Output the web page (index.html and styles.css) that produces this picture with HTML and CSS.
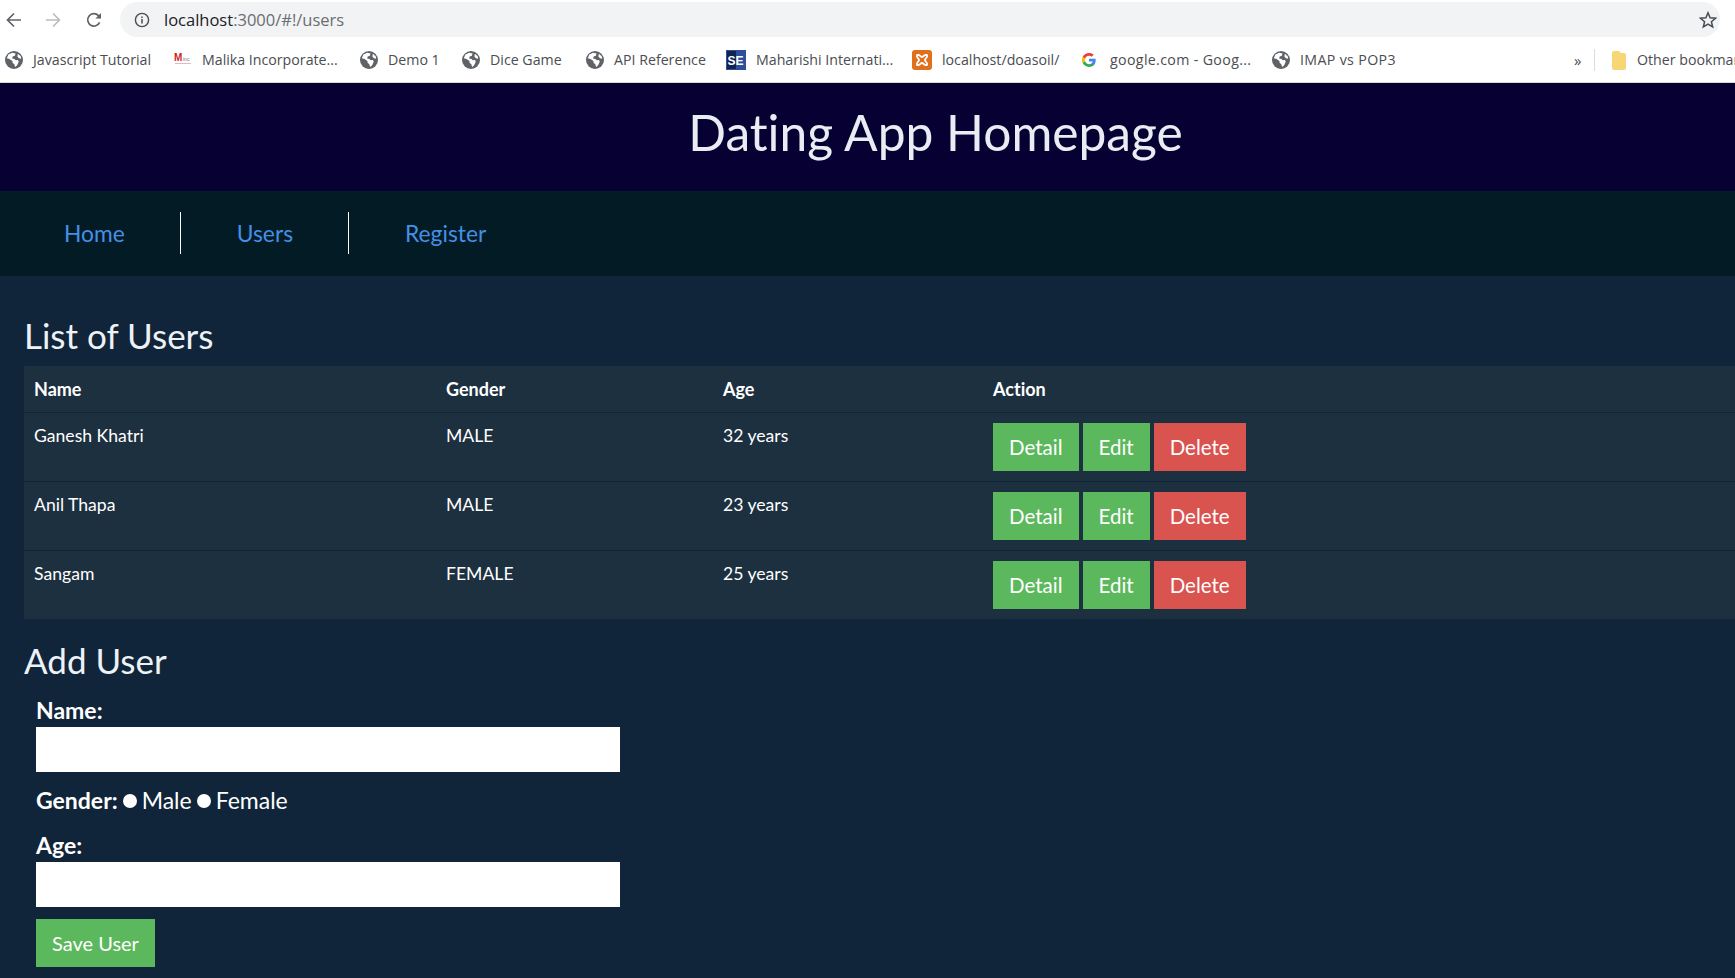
FILE: index.html
```html
<!DOCTYPE html>
<html lang="en">
<head>
    <meta charset="UTF-8">
    <title>Dating App Homepage</title>
    <link rel="stylesheet" href="styles.css">
</head>
<body>
    <svg class="defs" width="0" height="0">
        <symbol id="globe" viewBox="0 0 16 16">
            <circle cx="8" cy="8" r="8" fill="#5f6368"/>
            <path d="M3 3.2 6.4 1.6l3 .6-.6 2-2 .6-.4 1.8 2 .4 1.2 1.2 2-.2.6 1.6-1.4 3-1.8 1.6-.8-2.6-1.4-1-.2-1.8L4 7.2 1.6 6.4z" fill="#fff"/>
            <path d="M11.4 2.4 14 4.6l.4 2.2-2-.4-1.4-1.6z" fill="#fff"/>
        </symbol>
    </svg>

    <div class="toolbar">
        <svg class="nav-icon" width="18" height="18" viewBox="0 0 18 18"><path d="M16 9H3M9 2.500 2.500 9 9 15.500" fill="none" stroke="#5f6368" stroke-width="1.7"/></svg>
        <svg class="nav-icon forward" width="18" height="18" viewBox="0 0 18 18"><path d="M2 9h13M9 2.500 15.500 9 9 15.500" fill="none" stroke="#b9bcc0" stroke-width="1.7"/></svg>
        <svg class="nav-icon reload" width="18" height="18" viewBox="0 0 18 18"><path d="M14.600 11.400A6.200 6.200 0 1 1 13.400 4.600L15.600 6.800" fill="none" stroke="#5f6368" stroke-width="1.7"/><path d="M16 2v5.600h-5.600z" fill="#5f6368"/></svg>
        <div class="address">
            <svg width="16" height="16" viewBox="0 0 16 16"><circle cx="8" cy="8" r="6.600" fill="none" stroke="#4a4d51" stroke-width="1.4"/><path d="M8 7v4.400M8 4.400v1.500" stroke="#4a4d51" stroke-width="1.5"/></svg>
            <span class="url"><span class="host">localhost</span>:3000/#!/users</span>
            <svg class="star" width="18" height="18" viewBox="0 0 18 18"><path d="M9 1.800l2.100 5 5.400.4-4.100 3.500 1.300 5.300L9 13.200 4.300 16l1.300-5.300L1.500 7.200l5.400-.4z" fill="none" stroke="#4a4d51" stroke-width="1.5"/></svg>
        </div>
    </div>

    <div class="bookmarks">
        <a class="mark w-js"><svg width="18" height="18"><use href="#globe"/></svg>Javascript Tutorial</a>
        <a class="mark w-malika">
            <svg width="18" height="18" viewBox="0 0 18 18"><text x="0" y="10" class="logo-m">M</text><text x="9" y="10" class="logo-sub">inc</text><rect x="1" y="12" width="16" height="1" fill="#e9b7b7"/></svg>Malika Incorporate...</a>
        <a class="mark w-demo"><svg width="18" height="18"><use href="#globe"/></svg>Demo 1</a>
        <a class="mark w-dice"><svg width="18" height="18"><use href="#globe"/></svg>Dice Game</a>
        <a class="mark w-api"><svg width="18" height="18"><use href="#globe"/></svg>API Reference</a>
        <a class="mark w-mum">
            <svg width="20" height="20" viewBox="0 0 20 20"><rect width="20" height="20" fill="#2f4f9a"/><rect x="1" y="1" width="9" height="18" fill="#12234f"/><text x="1.500" y="15" class="logo-se">SE</text></svg>Maharishi Internati...</a>
        <a class="mark w-local">
            <svg width="20" height="20" viewBox="0 0 20 20"><rect width="20" height="20" rx="3" fill="#e0701d"/><path d="M5 5c3-1 3 2 5 2s2-3 5-2c1 3-2 3-2 5s3 2 2 5c-3 1-3-2-5-2s-2 3-5 2c-1-3 2-3 2-5S4 8 5 5z" fill="none" stroke="#fff" stroke-width="1.8"/></svg>localhost/doasoil/</a>
        <a class="mark w-google">
            <svg width="16" height="16" viewBox="0 0 48 48"><path d="M44 24.500c0-1.500-.1-2.900-.4-4.300H24v8.100h11.300c-.5 2.600-2 4.900-4.300 6.400v5.300h6.900C41.900 36.300 44 30.900 44 24.500z" fill="#4285f4"/><path d="M24 45c5.800 0 10.600-1.900 14-5.200l-6.900-5.300c-1.900 1.300-4.300 2-7.100 2-5.500 0-10.100-3.700-11.800-8.700H5.100v5.500C8.600 39.800 15.800 45 24 45z" fill="#34a853"/><path d="M12.200 27.800c-.9-2.600-.9-5.400 0-8v-5.500H5.100c-3 5.900-3 12.900 0 19z" fill="#fbbc05"/><path d="M24 11.300c3.100 0 5.900 1.100 8.100 3.200l6.100-6.100C34.500 5 29.700 3 24 3 15.800 3 8.600 8.200 5.100 14.300l7.100 5.500c1.700-5 6.300-8.500 11.800-8.500z" fill="#ea4335"/></svg>google.com - Goog...</a>
        <a class="mark w-imap"><svg width="18" height="18"><use href="#globe"/></svg>IMAP vs POP3</a>
        <span class="more">»</span>
        <span class="divider"></span>
        <a class="mark other">
            <svg width="16" height="20" viewBox="0 0 16 20"><path d="M1 3a2 2 0 0 1 2-2h5l2 2h3a2 2 0 0 1 2 2v13a2 2 0 0 1-2 2H3a2 2 0 0 1-2-2z" fill="#f6d675"/></svg>Other bookmarks</a>
    </div>

    <div class="page">
        <header class="site-header">
            <h1>Dating App Homepage</h1>
        </header>
        <nav class="site-nav">
            <a class="nav-link">Home</a>
            <a class="nav-link">Users</a>
            <a class="nav-link">Register</a>
        </nav>
        <main class="content">
            <h2>List of Users</h2>
            <table class="users">
                <thead>
                    <tr><th class="col-name">Name</th><th class="col-gender">Gender</th><th class="col-age">Age</th><th>Action</th></tr>
                </thead>
                <tbody>
                    <tr>
                        <td>Ganesh Khatri</td><td>MALE</td><td>32 years</td>
                        <td><div class="actions"><button class="btn green">Detail</button><button class="btn green">Edit</button><button class="btn red">Delete</button></div></td>
                    </tr>
                    <tr>
                        <td>Anil Thapa</td><td>MALE</td><td>23 years</td>
                        <td><div class="actions"><button class="btn green">Detail</button><button class="btn green">Edit</button><button class="btn red">Delete</button></div></td>
                    </tr>
                    <tr>
                        <td>Sangam</td><td>FEMALE</td><td>25 years</td>
                        <td><div class="actions"><button class="btn green">Detail</button><button class="btn green">Edit</button><button class="btn red">Delete</button></div></td>
                    </tr>
                </tbody>
            </table>

            <h2 class="add-title">Add User</h2>
            <form class="add-form">
                <div class="field">
                    <label for="name">Name:</label>
                    <input type="text" id="name">
                </div>
                <div class="field radios">
                    <label>Gender:</label>
                    <input type="radio" name="gender" id="male"><span>Male</span>
                    <input type="radio" name="gender" id="female"><span>Female</span>
                </div>
                <div class="field">
                    <label for="age">Age:</label>
                    <input type="text" id="age">
                </div>
                <button type="button" class="btn green save">Save User</button>
            </form>
        </main>
    </div>
</body>
</html>
```

FILE: styles.css
```css
html, body {
    margin: 0;
    padding: 0;
    height: 100%;
    overflow: hidden;
    background: #11253a;
}
body {
    font-family: "Lato", sans-serif;
    font-variant-ligatures: none;
    color: #fff;
}
.defs {
    position: absolute;
}
.toolbar {
    display: flex;
    align-items: center;
    height: 39px;
    padding-right: 15px;
    background: #fff;
    box-sizing: border-box;
}
.nav-icon {
    flex: none;
    margin-left: 5px;
}
.forward {
    margin-left: 21px;
}
.reload {
    margin-left: 23px;
}
.address {
    flex: 1;
    display: flex;
    align-items: center;
    height: 35px;
    margin-left: 17px;
    padding: 0 3px 0 14px;
    border-radius: 18px;
    background: #f1f3f4;
}
.url {
    margin-left: 14px;
    font-family: "Open Sans", sans-serif;
    font-size: 16.5px;
    color: #6a6d71;
}
.host {
    color: #202124;
}
.star {
    margin-left: auto;
}
.bookmarks {
    display: flex;
    align-items: center;
    height: 44px;
    padding-left: 5px;
    padding-bottom: 2px;
    background: #fff;
    border-bottom: 1px solid #d8dade;
    box-sizing: border-box;
    font-family: "Open Sans", sans-serif;
    font-size: 14.2px;
    color: #4a4d51;
    white-space: nowrap;
    overflow: hidden;
}
.mark {
    display: flex;
    align-items: center;
    flex: none;
    gap: 10px;
}
.mark svg {
    flex: none;
}
.w-js { width: 169px; }
.w-malika { width: 186px; }
.w-demo { width: 102px; }
.w-dice { width: 124px; }
.w-api { width: 140px; }
.w-mum { width: 186px; }
.w-local { width: 169px; }
.w-google { width: 191px; gap: 13px; letter-spacing: .35px; }
.w-imap { width: 302px; letter-spacing: .35px; }
.more {
    flex: none;
    width: 20px;
    font-size: 15px;
}
.divider {
    flex: none;
    width: 1px;
    height: 22px;
    margin-right: 15px;
    background: #d8dade;
}
.other {
    margin-left: 1px;
}
.logo-m {
    font-family: "Liberation Sans", sans-serif;
    font-size: 10px;
    font-weight: bold;
    fill: #cf1f1f;
}
.logo-sub {
    font-family: "Liberation Sans", sans-serif;
    font-size: 5px;
    fill: #777;
}
.logo-se {
    font-family: "Liberation Sans", sans-serif;
    font-size: 12px;
    font-weight: bold;
    fill: #fff;
}
.page {
    width: 1871px;
}
.site-header {
    height: 108px;
    background: #070033;
    text-align: center;
}
.site-header h1 {
    margin: 0;
    padding-top: 19px;
    font-size: 49.7px;
    font-weight: 400;
    line-height: 60px;
    color: #e9ecf2;
}
.site-nav {
    display: flex;
    align-items: center;
    height: 85px;
    padding-left: 8px;
    padding-bottom: 1px;
    box-sizing: border-box;
    background: #031b24;
}
.nav-link {
    display: block;
    padding: 0 55px 0 56px;
    font-size: 22.8px;
    line-height: 42px;
    color: #4590e6;
    border-right: 1px solid #fff;
}
.nav-link:last-child {
    border-right: none;
}
.content {
    padding: 39px 24px 0;
}
h2 {
    margin: 0 0 11px;
    font-size: 35px;
    font-weight: 400;
    line-height: 40px;
    color: #eef2f6;
}
.users {
    width: 100%;
    border-collapse: collapse;
    background: #1d3040;
    font-size: 17.6px;
    line-height: 25px;
}
.users th, .users td {
    padding: 10px;
    text-align: left;
    vertical-align: top;
    border-top: 1px solid #11253a;
}
.users thead th {
    border-top: none;
    border-bottom: 1px solid #11253a;
    font-size: 18px;
    line-height: 26px;
}
.col-name { width: 392px; }
.col-gender { width: 257px; }
.col-age { width: 250px; }
.actions {
    display: flex;
    gap: 4px;
}
.btn {
    padding: 0 16px;
    height: 48px;
    border: none;
    font-family: inherit;
    font-size: 20.5px;
    font-variant-ligatures: none;
    color: #fff;
}
.btn.save {
    margin-top: -1px;
    font-size: 20px;
}
.green {
    background: #5cb85c;
}
.red {
    background: #d9534f;
}
.add-title {
    margin-top: 21px;
    margin-bottom: 15px;
}
.add-form {
    padding-left: 12px;
    font-size: 23px;
    line-height: 31px;
}
.field {
    margin-bottom: 13px;
}
.field label {
    display: block;
    font-weight: 700;
}
.field input[type="text"] {
    display: block;
    width: 584px;
    height: 45px;
    margin-top: 1px;
    padding: 0;
    border: none;
    background: #fff;
}
.radios {
    display: flex;
    align-items: center;
    gap: 5px;
    margin-bottom: 14px;
}
.radios input {
    appearance: none;
    width: 14px;
    height: 14px;
    margin: 0;
    border-radius: 50%;
    background: #fff;
}
```
